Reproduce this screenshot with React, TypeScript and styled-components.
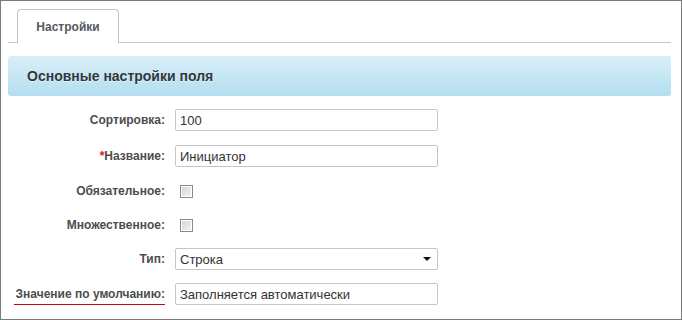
import React from 'react';
import styled, { createGlobalStyle } from 'styled-components';

const GlobalStyle = createGlobalStyle`
  html, body {
    margin: 0;
    padding: 0;
    background: #fff;
  }
  body {
    font-family: 'Liberation Sans', Arial, sans-serif;
  }
`;

const Frame = styled.div`
  box-sizing: border-box;
  width: 682px;
  height: 320px;
  border: 1px solid #7b7b7b;
  padding: 8px 10px 0 7px;
  background: #fff;
`;

const TabBar = styled.div`
  display: flex;
  height: 33px;
  padding-left: 9px;
  border-bottom: 1px solid #c3c7cb;
`;

const Tab = styled.div`
  box-sizing: border-box;
  width: 102px;
  height: 34px;
  display: flex;
  align-items: center;
  justify-content: center;
  border: 1px solid #c3c7cb;
  border-bottom: none;
  border-radius: 4px 4px 0 0;
  background: #fff;
  font-size: 12px;
  font-weight: bold;
  color: #555a60;
  padding-top: 1px;
`;

const SectionHeader = styled.div`
  margin-top: 13px;
  height: 40px;
  display: flex;
  align-items: center;
  padding-left: 19px;
  border-radius: 3px;
  background: linear-gradient(to bottom, #d9eff8 0%, #b3def0 100%);
  font-size: 14px;
  font-weight: bold;
  color: #33373c;
  text-shadow: 0 1px 0 rgba(255, 255, 255, 0.5);
`;

const Form = styled.div`
  margin-top: 6px;
  display: grid;
  grid-template-columns: 157px 263px;
  grid-template-rows: 36px 36px 34px 34px 34px 36px;
  column-gap: 10px;
  align-items: center;
`;

const Label = styled.div<{ $marked?: boolean }>`
  justify-self: end;
  font-size: 12px;
  font-weight: bold;
  color: #4d4d4d;
  padding-bottom: ${(p) => (p.$marked ? '3px' : '0')};
  border-bottom: ${(p) => (p.$marked ? '1px solid #d40000' : 'none')};
  padding-left: ${(p) => (p.$marked ? '2px' : '0')};
  margin-top: ${(p) => (p.$marked ? '4px' : '0')};
`;

const Star = styled.span`
  color: #d11a1a;
`;

const TextBox = styled.input`
  box-sizing: border-box;
  width: 263px;
  height: 22px;
  margin: 0;
  padding: 0 4px;
  border: 1px solid #c6c6c6;
  border-radius: 2px;
  font-family: 'Liberation Sans', Arial, sans-serif;
  font-size: 13px;
  color: #333;
  background: #fff;
  outline: none;
`;

const Check = styled.input`
  appearance: none;
  display: block;
  box-sizing: border-box;
  width: 13px;
  height: 13px;
  margin: 0 0 0 5px;
  border: 1px solid #8a8a8a;
  background: linear-gradient(135deg, #d4d4d4 0%, #f4f4f4 100%);
  box-shadow: inset 0 0 0 1px #fff;
`;

const SelectBox = styled.div`
  box-sizing: border-box;
  width: 263px;
  height: 22px;
  display: flex;
  align-items: center;
  justify-content: space-between;
  padding: 0 6px 0 4px;
  border: 1px solid #c6c6c6;
  border-radius: 2px;
  font-size: 13px;
  color: #333;
`;

const Caret = styled.span`
  width: 0;
  height: 0;
  border-left: 4px solid transparent;
  border-right: 4px solid transparent;
  border-top: 4px solid #111;
`;

export default function App() {
  return (
    <>
      <GlobalStyle />
      <Frame>
        <TabBar>
          <Tab>Настройки</Tab>
        </TabBar>
        <SectionHeader>Основные настройки поля</SectionHeader>
        <Form>
          <Label>Сортировка:</Label>
          <TextBox defaultValue="100" />

          <Label>
            <Star>*</Star>Название:
          </Label>
          <TextBox defaultValue="Инициатор" />

          <Label>Обязательное:</Label>
          <div>
            <Check type="checkbox" />
          </div>

          <Label>Множественное:</Label>
          <div>
            <Check type="checkbox" />
          </div>

          <Label>Тип:</Label>
          <SelectBox>
            <span>Строка</span>
            <Caret />
          </SelectBox>

          <Label $marked>Значение по умолчанию:</Label>
          <TextBox defaultValue="Заполняется автоматически" />
        </Form>
      </Frame>
    </>
  );
}
